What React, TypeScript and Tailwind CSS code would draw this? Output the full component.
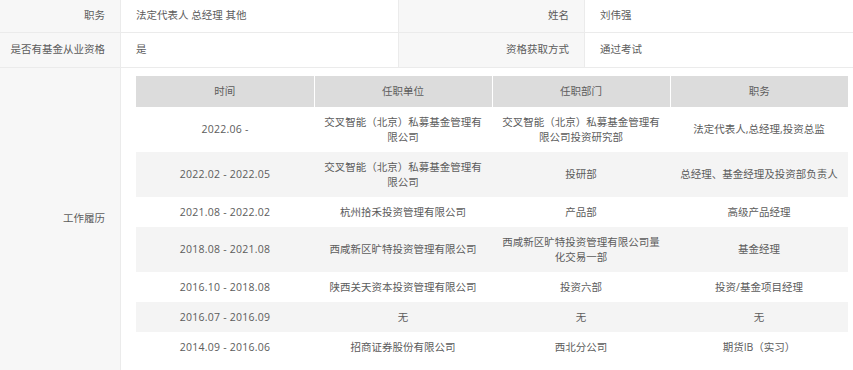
const rows = [
  { time: "2022.06 -", org: "交叉智能（北京）私募基金管理有限公司", dept: "交叉智能（北京）私募基金管理有限公司投资研究部", title: "法定代表人,总经理,投资总监" },
  { time: "2022.02 - 2022.05", org: "交叉智能（北京）私募基金管理有限公司", dept: "投研部", title: "总经理、基金经理及投资部负责人" },
  { time: "2021.08 - 2022.02", org: "杭州拾禾投资管理有限公司", dept: "产品部", title: "高级产品经理" },
  { time: "2018.08 - 2021.08", org: "西咸新区旷特投资管理有限公司", dept: "西咸新区旷特投资管理有限公司量化交易一部", title: "基金经理" },
  { time: "2016.10 - 2018.08", org: "陕西关天资本投资管理有限公司", dept: "投资六部", title: "投资/基金项目经理" },
  { time: "2016.07 - 2016.09", org: "无", dept: "无", title: "无" },
  { time: "2014.09 - 2016.06", org: "招商证券股份有限公司", dept: "西北分公司", title: "期货IB（实习）" },
];

const label = "bg-[#f7f7f7] border-r border-b border-[#ebebeb] pr-[15px] flex items-center justify-end";
const value = "border-r border-b border-[#ebebeb] pl-[15px] flex items-center";
const cell = "py-[7.5px] px-[6px] leading-[15px]";

export default function App() {
  return (
    <div
      className="w-[853px] h-[370px] overflow-hidden bg-white text-[10.5px] text-[#5c5c5c]"
      style={{ fontFamily: '"Open Sans", "Noto Sans CJK SC", sans-serif' }}
    >
      <div className="grid grid-cols-[121px_278px_186px_1fr] grid-rows-[33px_35px_1fr]">
        <div className={label}>职务</div>
        <div className={value}>法定代表人 总经理 其他</div>
        <div className={label}>姓名</div>
        <div className={value + " border-r-0"}>刘伟强</div>

        <div className={label}>是否有基金从业资格</div>
        <div className={value}>是</div>
        <div className={label}>资格获取方式</div>
        <div className={value + " border-r-0"}>通过考试</div>

        <div className={label + " border-b-0"}>工作履历</div>
        <div className="col-span-3 pl-[15px] pr-[5px] pt-[8px] pb-[8px]">
          <table className="w-full table-fixed border-collapse text-center">
            <thead>
              <tr className="bg-[#dcdcdc] h-[31px]">
                <th className="font-normal border-r border-white">时间</th>
                <th className="font-normal border-r border-white">任职单位</th>
                <th className="font-normal border-r border-white">任职部门</th>
                <th className="font-normal">职务</th>
              </tr>
            </thead>
            <tbody>
              {rows.map((r, i) => (
                <tr key={i} className={i % 2 === 1 ? "bg-[#f4f4f4]" : "bg-white"}>
                  <td className={cell + " tracking-[0.25px]"}>{r.time}</td>
                  <td className={cell}>{r.org}</td>
                  <td className={cell}>{r.dept}</td>
                  <td className={cell}>{r.title}</td>
                </tr>
              ))}
            </tbody>
          </table>
        </div>
      </div>
    </div>
  );
}
